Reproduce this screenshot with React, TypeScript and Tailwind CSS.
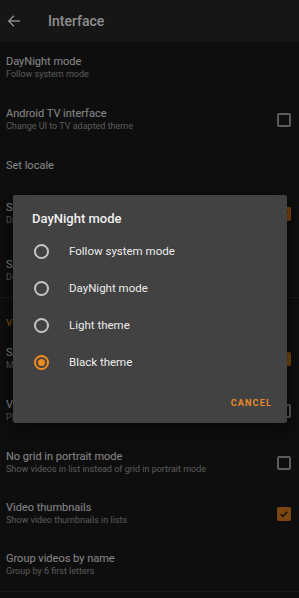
import React from 'react';

type Pref = {
  title: string;
  summary?: string;
  check?: 'on' | 'off';
  h: string;
};

const top: Pref[] = [
  { title: 'DayNight mode', summary: 'Follow system mode', h: 'h-[52px]' },
  { title: 'Android TV interface', summary: 'Change UI to TV adapted theme', check: 'off', h: 'h-[52px]' },
  { title: 'Set locale', h: 'h-[38px]' },
  {
    title: 'Show all files',
    summary: 'Display all files in the browser, not only media files',
    check: 'on',
    h: 'h-[60px]',
  },
  { title: 'Show hidden files', summary: 'Default: hidden', h: 'h-[53px]' },
];

const video: Pref[] = [
  { title: 'Show seen marker', summary: 'Mark played media', check: 'on', h: 'h-[52px]' },
  { title: 'Video list as grid', summary: 'Play from grid', check: 'off', h: 'h-[52px]' },
  { title: 'No grid in portrait mode', summary: 'Show videos in list instead of grid in portrait mode', check: 'off', h: 'h-[51px]' },
  { title: 'Video thumbnails', summary: 'Show video thumbnails in lists', check: 'on', h: 'h-[51px]' },
  { title: 'Group videos by name', summary: 'Group by 6 first letters', h: 'h-[52px]' },
];

const CheckBox: React.FC<{ on: boolean }> = ({ on }) =>
  on ? (
    <div className="w-[14px] h-[14px] rounded-[2px] bg-[#e0801f] flex items-center justify-center">
      <svg width="10" height="10" viewBox="0 0 24 24" fill="none" stroke="#1b1b1b" strokeWidth="3.5">
        <path d="M4 12.5l5 5L20 6.5" />
      </svg>
    </div>
  ) : (
    <div className="w-[14px] h-[14px] rounded-[2px] border-2 border-[#a8a8a8]" />
  );

const Row: React.FC<{ p: Pref }> = ({ p }) => (
  <div className={`${p.h} flex items-center pl-[6px] pr-[8px]`}>
    <div className="flex-1 min-w-0 pr-4">
      <div className="text-[11px] leading-[13px] text-[#f2f2f2]">{p.title}</div>
      {p.summary && <div className="text-[9px] leading-[13px] text-[#a3a3a3]">{p.summary}</div>}
    </div>
    {p.check && <CheckBox on={p.check === 'on'} />}
  </div>
);

const options = ['Follow system mode', 'DayNight mode', 'Light theme', 'Black theme'];

const App: React.FC = () => {
  return (
    <div className="relative w-[299px] h-[598px] overflow-hidden bg-[#1b1b1b]" style={{ fontFamily: 'Roboto, "Noto Sans", sans-serif' }}>
      <div className="h-[42px] bg-[#282828] flex items-center">
        <svg className="ml-[7px]" width="14" height="14" viewBox="0 0 24 24" fill="none" stroke="#ffffff" strokeWidth="2.4" strokeLinecap="square">
          <path d="M21 12H4M11 4l-8 8 8 8" />
        </svg>
        <span className="ml-[27px] text-[14px] font-medium text-white">Interface</span>
      </div>

      {top.map((p) => (
        <Row key={p.title} p={p} />
      ))}
      <div className="h-px bg-[#2e2e2e]" />
      <div className="h-[35px] pl-[6px] pt-[18px] text-[9.5px] font-medium leading-[14px] text-[#e0801f]">Video</div>
      {video.map((p) => (
        <Row key={p.title} p={p} />
      ))}
      <div className="h-px bg-[#2e2e2e]" />

      {/* scrim */}
      <div className="absolute inset-0 bg-black/[0.45]" />

      {/* dialog */}
      <div className="absolute left-[13px] top-[195px] w-[274px] h-[228px] bg-[#424242] rounded-[2px] shadow-[0_6px_20px_rgba(0,0,0,0.6)] flex flex-col">
        <div className="pl-[19px] pt-[16px] text-[13px] font-medium leading-[16px] text-[#f0f0f0]">DayNight mode</div>
        <div className="mt-[6px] flex flex-col">
          {options.map((o, i) => (
            <div key={o} className="h-[37px] flex items-center pl-[21px]">
              {i === 3 ? (
                <div className="w-[15px] h-[15px] rounded-full border-2 border-[#f28a1c] flex items-center justify-center">
                  <div className="w-[7px] h-[7px] rounded-full bg-[#f28a1c]" />
                </div>
              ) : (
                <div className="w-[15px] h-[15px] rounded-full border-2 border-[#c4c4c4]" />
              )}
              <span className="ml-[20px] text-[11.5px] text-[#ececec]">{o}</span>
            </div>
          ))}
        </div>
        <div className="flex-1 flex items-center justify-end pr-[15px] pt-[4px]">
          <span className="text-[9px] font-bold tracking-[1.2px] text-[#e8892c]">CANCEL</span>
        </div>
      </div>
    </div>
  );
};

export default App;
